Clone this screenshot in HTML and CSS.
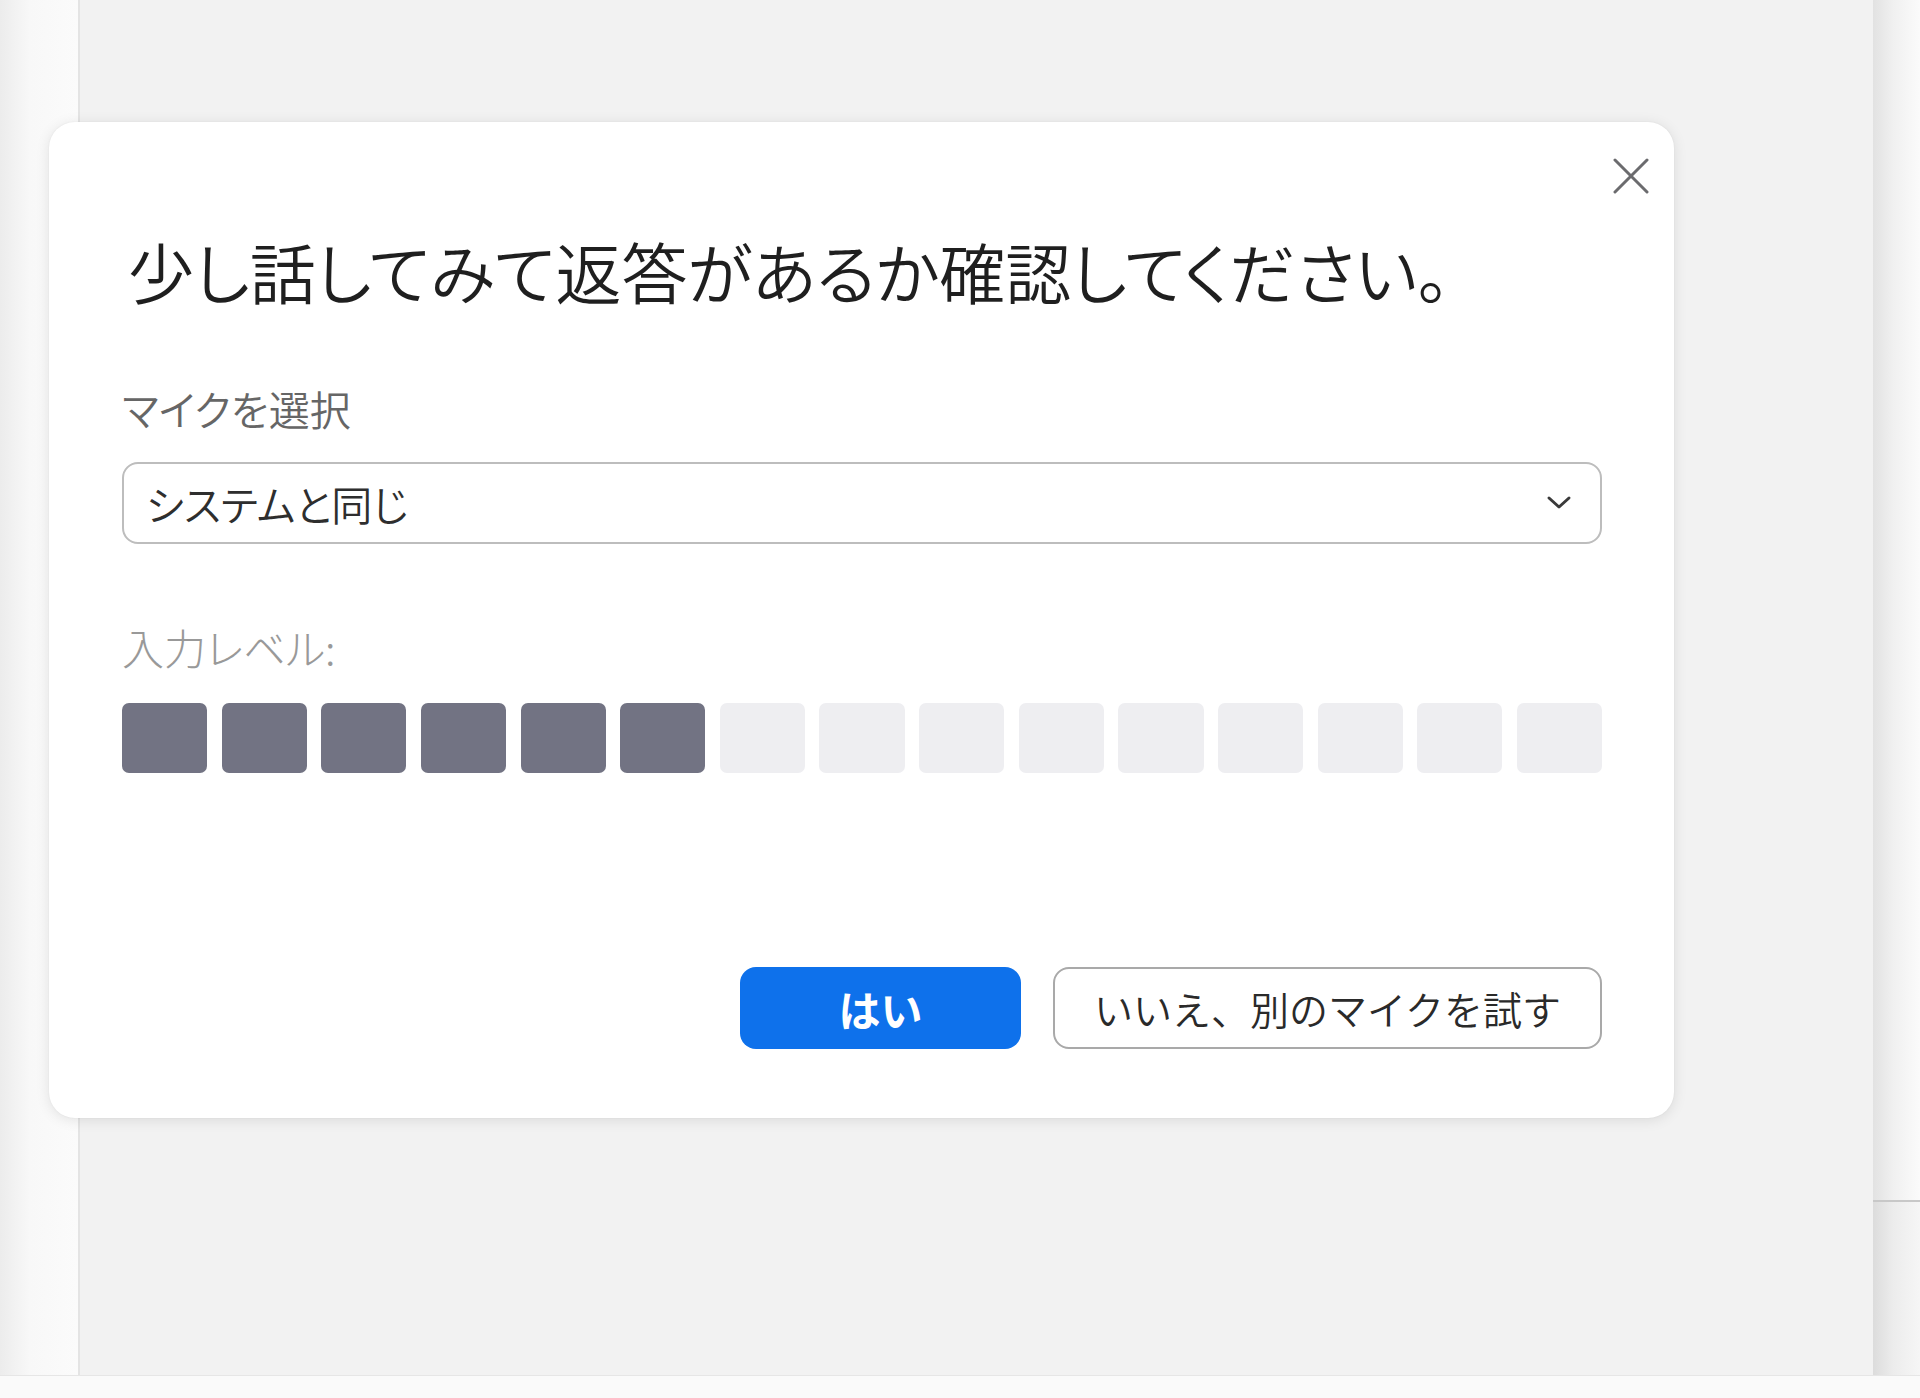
FILE: index.html
```html
<!DOCTYPE html>
<html lang="ja">
<head>
<meta charset="utf-8">
<title>マイクのテスト</title>
<link rel="stylesheet" href="styles.css">
</head>
<body>
  <div class="frame">
    <aside class="left-rail"></aside>
    <main class="canvas"></main>
    <aside class="right-rail">
      <div class="rail-top"></div>
      <div class="rail-bottom"></div>
    </aside>
  </div>
  <footer class="bottom-strip"></footer>

  <section class="dialog" role="dialog">
    <button class="close" aria-label="閉じる">
      <svg viewBox="0 0 36 36" width="36" height="36"><path d="M2 2 L34 34 M34 2 L2 34" stroke="#6b6b6e" stroke-width="3" fill="none" stroke-linecap="round"/></svg>
    </button>
    <h1 class="title">少し話してみて返答があるか確認してください。</h1>
    <div class="label">マイクを選択</div>
    <div class="select">
      <span class="select-text">システムと同じ</span>
      <svg class="chevron" viewBox="0 0 26 16" width="26" height="16"><path d="M3 3 L13 12 L23 3" stroke="#3a3a3a" stroke-width="3" fill="none" stroke-linecap="round" stroke-linejoin="round"/></svg>
    </div>
    <div class="level-label">入力レベル:</div>
    <div class="meter">
      <span class="bar on"></span><span class="bar on"></span><span class="bar on"></span><span class="bar on"></span><span class="bar on"></span><span class="bar on"></span>
      <span class="bar"></span><span class="bar"></span><span class="bar"></span><span class="bar"></span><span class="bar"></span><span class="bar"></span><span class="bar"></span><span class="bar"></span><span class="bar"></span>
    </div>
    <div class="actions">
      <button class="btn primary">はい</button>
      <button class="btn secondary">いいえ、別のマイクを試す</button>
    </div>
  </section>
</body>
</html>
```
FILE: styles.css
```css
html, body {
  margin: 0;
  padding: 0;
}
body {
  width: 1920px;
  height: 1398px;
  background: #f2f2f2;
  font-family: "Noto Sans CJK JP", "Noto Sans", sans-serif;
  font-feature-settings: "palt";
  overflow: hidden;
  position: relative;
}
.frame {
  display: grid;
  grid-template-columns: 80px 1fr 47px;
  height: 1375px;
}
.left-rail {
  background: linear-gradient(to right, #ececec 0px, #f8f8f8 30px, #fbfbfb 78px);
  border-right: 2px solid #e4e4e4;
}
.canvas {
  background: #f2f2f2;
}
.right-rail {
  display: grid;
  grid-template-rows: 1200px 1fr;
  background: linear-gradient(to right, #e2e2e2 0px, #f0f0f0 20px, #fbfbfb 47px);
}
.rail-bottom {
  border-top: 2px solid #c8c8c8;
  background: linear-gradient(to right, #dcdcdc 0px, #ececec 20px, #f6f6f6 47px);
}
.bottom-strip {
  height: 23px;
  background: #fafafa;
  border-top: 1px solid #e6e6e6;
}

.dialog {
  position: absolute;
  left: 49px;
  top: 122px;
  width: 1625px;
  height: 996px;
  box-sizing: border-box;
  padding: 108px 72px 69px 73px;
  background: #ffffff;
  border-radius: 26px;
  box-shadow: 0 2px 14px rgba(0, 0, 0, 0.10), 0 0 2px rgba(0, 0, 0, 0.06);
  display: flex;
  flex-direction: column;
}
.close {
  position: absolute;
  right: 25px;
  top: 36px;
  width: 36px;
  height: 36px;
  padding: 0;
  border: none;
  background: transparent;
}
.close svg {
  display: block;
}
.title {
  margin: 0;
  font-size: 66px;
  line-height: 80px;
  height: 80px;
  font-weight: 350;
  color: #1f1f1f;
  padding-left: 6px;
  white-space: nowrap;
}
.label {
  margin-top: 73px;
  font-size: 41px;
  line-height: 50px;
  height: 50px;
  font-weight: 350;
  color: #666666;
}
.select {
  margin-top: 29px;
  height: 82px;
  box-sizing: border-box;
  border: 2px solid #bdbdbd;
  border-radius: 16px;
  display: flex;
  align-items: center;
  justify-content: space-between;
  padding: 0 28px 0 22px;
}
.select-text {
  font-size: 41px;
  font-weight: 350;
  color: #2e2e2e;
}
.chevron {
  display: block;
}
.level-label {
  margin-top: 78px;
  font-size: 42px;
  line-height: 50px;
  height: 50px;
  font-weight: 300;
  color: #999999;
}
.meter {
  margin-top: 31px;
  height: 70px;
  display: flex;
  gap: 14.5px;
}
.bar {
  flex: 1;
  border-radius: 7px;
  background: #eeeef1;
}
.bar.on {
  background: #727383;
}
.actions {
  margin-top: auto;
  display: flex;
  justify-content: flex-end;
  gap: 32px;
}
.btn {
  height: 82px;
  box-sizing: border-box;
  border-radius: 16px;
  font-family: inherit;
  font-size: 39px;
  padding: 0;
}
.primary {
  width: 281px;
  background: #0e71eb;
  border: none;
  color: #ffffff;
  font-weight: 700;
  font-size: 42px;
}
.secondary {
  width: 549px;
  background: #ffffff;
  border: 2px solid #a9a9a9;
  color: #2a2a2a;
  font-weight: 350;
}
```
